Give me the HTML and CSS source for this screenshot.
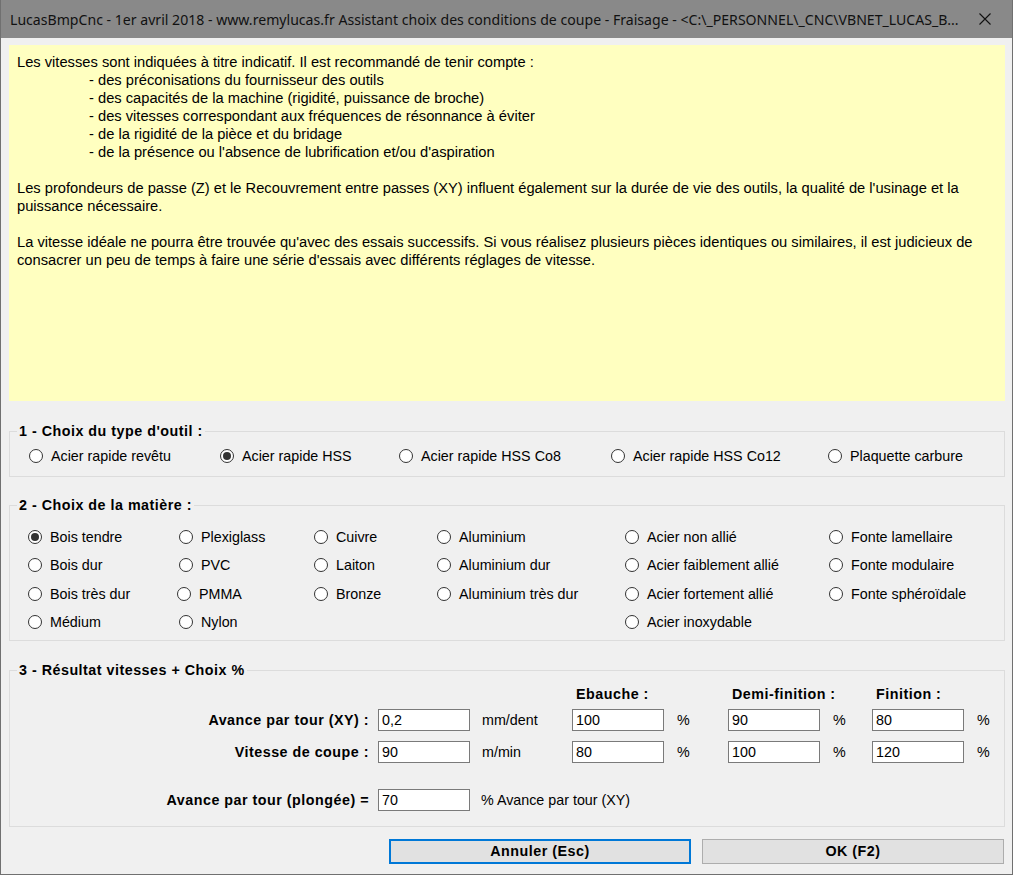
FILE: index.html
```html
<!DOCTYPE html>
<html lang="fr">
<head>
<meta charset="utf-8">
<title>Assistant choix des conditions de coupe</title>
<link rel="stylesheet" href="styles.css">
</head>
<body>
<div class="window">
  <div class="titlebar">
    <div class="title">LucasBmpCnc - 1er avril 2018 - www.remylucas.fr Assistant choix des conditions de coupe - Fraisage - &lt;C:\_PERSONNEL\_CNC\VBNET_LUCAS_B...</div>
    <div class="close"><svg width="12" height="12" viewBox="0 0 12 12"><path d="M0.5 0.5 L11.5 11.5 M11.5 0.5 L0.5 11.5" stroke="#111" stroke-width="1.1" fill="none"/></svg></div>
  </div>
  <div class="content">
    <div class="info">
      <p>Les vitesses sont indiquées à titre indicatif. Il est recommandé de tenir compte :</p>
      <ul class="list">
        <li>- des préconisations du fournisseur des outils</li>
        <li>- des capacités de la machine (rigidité, puissance de broche)</li>
        <li>- des vitesses correspondant aux fréquences de résonnance à éviter</li>
        <li>- de la rigidité de la pièce et du bridage</li>
        <li>- de la présence ou l'absence de lubrification et/ou d'aspiration</li>
      </ul>
      <p class="gap">Les profondeurs de passe (Z) et le Recouvrement entre passes (XY) influent également sur la durée de vie des outils, la qualité de l'usinage et la<br>puissance nécessaire.</p>
      <p class="gap">La vitesse idéale ne pourra être trouvée qu'avec des essais successifs. Si vous réalisez plusieurs pièces identiques ou similaires, il est judicieux de<br>consacrer un peu de temps à faire une série d'essais avec différents réglages de vitesse.</p>
    </div>

    <section class="group g1">
      <div class="gtitle">1 - Choix du type d'outil :</div>
      <div class="radios tools">
        <label class="radio"><span class="dot"></span>Acier rapide revêtu</label>
        <label class="radio"><span class="dot on"></span>Acier rapide HSS</label>
        <label class="radio"><span class="dot"></span>Acier rapide HSS Co8</label>
        <label class="radio"><span class="dot"></span>Acier rapide HSS Co12</label>
        <label class="radio"><span class="dot"></span>Plaquette carbure</label>
      </div>
    </section>

    <section class="group g2">
      <div class="gtitle">2 - Choix de la matière :</div>
      <div class="radios materials">
        <label class="radio"><span class="dot on"></span>Bois tendre</label>
        <label class="radio"><span class="dot"></span>Plexiglass</label>
        <label class="radio"><span class="dot"></span>Cuivre</label>
        <label class="radio"><span class="dot"></span>Aluminium</label>
        <label class="radio"><span class="dot"></span>Acier non allié</label>
        <label class="radio"><span class="dot"></span>Fonte lamellaire</label>

        <label class="radio"><span class="dot"></span>Bois dur</label>
        <label class="radio"><span class="dot"></span>PVC</label>
        <label class="radio"><span class="dot"></span>Laiton</label>
        <label class="radio"><span class="dot"></span>Aluminium dur</label>
        <label class="radio"><span class="dot"></span>Acier faiblement allié</label>
        <label class="radio"><span class="dot"></span>Fonte modulaire</label>

        <label class="radio"><span class="dot"></span>Bois très dur</label>
        <label class="radio shift"><span class="dot"></span>PMMA</label>
        <label class="radio"><span class="dot"></span>Bronze</label>
        <label class="radio"><span class="dot"></span>Aluminium très dur</label>
        <label class="radio"><span class="dot"></span>Acier fortement allié</label>
        <label class="radio"><span class="dot"></span>Fonte sphéroïdale</label>

        <label class="radio"><span class="dot"></span>Médium</label>
        <label class="radio"><span class="dot"></span>Nylon</label>
        <span></span>
        <span></span>
        <label class="radio"><span class="dot"></span>Acier inoxydable</label>
        <span></span>
      </div>
    </section>

    <section class="group g3">
      <div class="gtitle">3 - Résultat vitesses + Choix %</div>
      <div class="frow head">
        <span></span><span></span><span></span>
        <span class="hd">Ebauche :</span><span></span>
        <span class="hd">Demi-finition :</span><span></span>
        <span class="hd">Finition :</span><span></span>
      </div>
      <div class="frow r1">
        <span class="lbl">Avance par tour (XY) :</span>
        <span class="box">0,2</span>
        <span class="unit">mm/dent</span>
        <span class="box">100</span><span class="pct">%</span>
        <span class="box">90</span><span class="pct">%</span>
        <span class="box">80</span><span class="pct">%</span>
      </div>
      <div class="frow r2">
        <span class="lbl">Vitesse de coupe :</span>
        <span class="box">90</span>
        <span class="unit">m/min</span>
        <span class="box">80</span><span class="pct">%</span>
        <span class="box">100</span><span class="pct">%</span>
        <span class="box">120</span><span class="pct">%</span>
      </div>
      <div class="frow r3">
        <span class="lbl">Avance par tour (plongée) =</span>
        <span class="box">70</span>
        <span class="unit wide">% Avance par tour (XY)</span>
      </div>
    </section>

    <div class="buttons">
      <button class="btn default">Annuler (Esc)</button>
      <button class="btn">OK (F2)</button>
    </div>
  </div>
</div>
</body>
</html>
```

FILE: styles.css
```css
* { box-sizing: border-box; }
html, body { margin: 0; padding: 0; background: #f0f0f0; }
body { font-family: "Liberation Sans", Arial, sans-serif; font-size: 14.3px; color: #000; }

.window {
  width: 1013px;
  height: 875px;
  border: 1px solid #707070;
  border-top: none;
  background: #f0f0f0;
  overflow: hidden;
}

.titlebar {
  height: 38px;
  background: #898989;
  display: flex;
  align-items: center;
  padding-left: 9px;
}
.title {
  flex: 1;
  font-family: "Noto Sans", "Open Sans", sans-serif;
  font-size: 14.1px;
  color: #111;
  white-space: nowrap;
}
.close {
  width: 38px;
  height: 38px;
  margin-right: 8px;
  display: flex;
  align-items: center;
  justify-content: center;
  flex: none;
}
.close svg { display: block; }

.content { padding: 7px 7px 0 8px; }

.info {
  background: #ffffc0;
  height: 356px;
  padding: 8px 8px;
  line-height: 18px;
  font-size: 14.7px;
}
.info p { margin: 0; }
.info p.gap { margin-top: 18px; }
.list { list-style: none; margin: 0; padding: 0 0 0 72px; }

.group {
  border: 1px solid #dcdcdc;
}
.gtitle {
  margin: -8px 0 0 7px;
  padding: 0 2px;
  width: fit-content;
  background: #f0f0f0;
  line-height: 15px;
  font-weight: bold;
  letter-spacing: 0.5px;
}

.g1 { margin-top: 30px; padding: 7px 0 10px 19px; }
.g1 .gtitle { margin-left: -12px; margin-bottom: 7px; margin-top: -15px; }
.g2 { margin-top: 28px; padding: 0 0 8px 18px; }
.g2 .gtitle { margin-left: -11px; margin-bottom: 14px; }
.g3 { margin-top: 29px; padding: 0 0 15px 0; }
.g3 .gtitle { margin-bottom: 8px; }

.radios { display: grid; grid-auto-rows: 20px; }
.tools { grid-template-columns: 191px 179px 212px 217px 1fr; }
.materials { grid-template-columns: 151px 135px 123px 188px 204px 1fr; row-gap: 8.33px; }

.radio {
  display: flex;
  align-items: center;
  gap: 8px;
  white-space: nowrap;
}
.radio.shift { margin-left: -2px; }
.dot {
  width: 14px;
  height: 14px;
  border: 1px solid #333;
  border-radius: 50%;
  background: #fff;
  display: flex;
  align-items: center;
  justify-content: center;
  flex: none;
}
.dot.on::after {
  content: "";
  width: 8px;
  height: 8px;
  border-radius: 50%;
  background: #333;
}

.frow {
  display: grid;
  grid-template-columns: 368px 92px 102px 92px 64px 92px 52px 92px 1fr;
  align-items: center;
}
.frow.head { height: 15px; font-weight: bold; letter-spacing: 0.5px; }
.frow.r1 { margin-top: 8px; height: 22px; }
.frow.r2 { margin-top: 10px; height: 22px; }
.frow.r3 { margin-top: 26px; height: 22px; }
.hd { padding-left: 4px; white-space: nowrap; }
.lbl { text-align: right; padding-right: 9px; font-weight: bold; letter-spacing: 0.5px; white-space: nowrap; }
.box {
  height: 22px;
  border: 1px solid #7a7a7a;
  background: #fff;
  padding: 0 3px;
  line-height: 20px;
}
.unit { padding-left: 12px; white-space: nowrap; }
.unit.wide { grid-column: 3 / 7; padding-left: 11px; }
.pct { padding-left: 13px; }

.buttons {
  margin-top: 12px;
  margin-right: 1px;
  display: flex;
  justify-content: flex-end;
  gap: 11px;
}
.btn {
  width: 302px;
  height: 25px;
  background: #e1e1e1;
  border: 1px solid #adadad;
  font-family: "Liberation Sans", Arial, sans-serif;
  font-size: 14.3px;
  font-weight: bold;
  letter-spacing: 0.5px;
  color: #000;
  padding: 0;
}
.btn.default { border: 2px solid #0078d7; }
```
